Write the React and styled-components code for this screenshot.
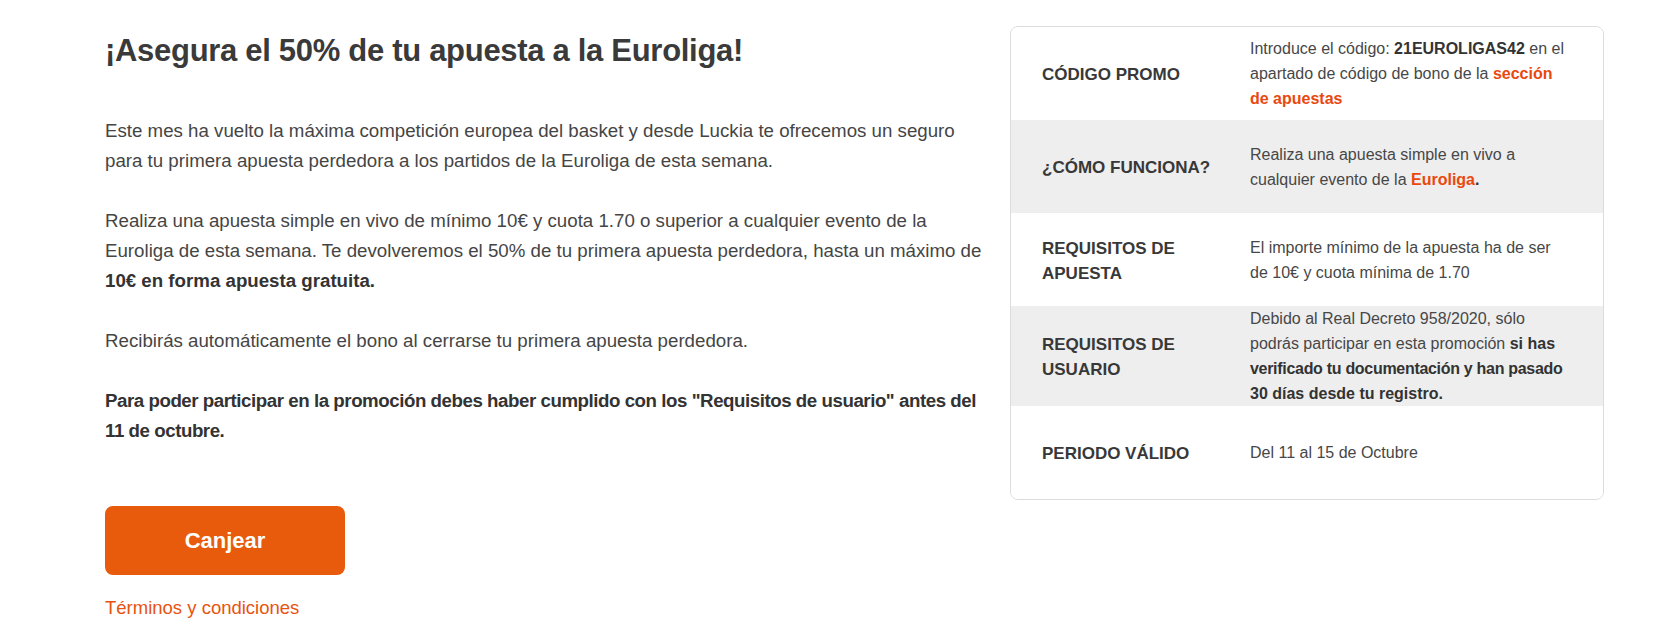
import React from "react";
import styled, { createGlobalStyle } from "styled-components";

const GlobalStyle = createGlobalStyle`
  html, body {
    margin: 0;
    padding: 0;
    background: #ffffff;
  }
  body {
    font-family: "Liberation Sans", Arial, sans-serif;
    color: #444444;
  }
`;

const Page = styled.div`
  display: flex;
  align-items: flex-start;
  gap: 25px;
  padding: 26px 0 0 105px;
`;

const Main = styled.section`
  width: 880px;
  flex: none;
`;

const Title = styled.h1`
  margin: 0 0 40px;
  font-family: "Liberation Sans", Arial, sans-serif;
  font-weight: 700;
  font-size: 31px;
  line-height: 50px;
  letter-spacing: -0.3px;
  color: #3a3a3a;
  white-space: nowrap;
`;

const Paragraph = styled.p`
  margin: 0 0 30px;
  font-size: 18.7px;
  line-height: 30px;
  color: #454545;
  white-space: nowrap;
  font-weight: ${(p) => (p.$bold ? 700 : 400)};
  letter-spacing: ${(p) => (p.$bold ? "-0.45px" : "0")};
  ${(p) => p.$bold && "color: #333333;"}
`;

const Strong = styled.strong`
  font-weight: 700;
  color: #333333;
  letter-spacing: ${(p) => (p.$tight ? "-0.3px" : "0")};
`;

const RedeemButton = styled.button`
  display: block;
  margin: 60px 0 0;
  width: 240px;
  height: 69px;
  border: none;
  border-radius: 8px;
  background: #e95b0c;
  color: #ffffff;
  font-family: "Liberation Sans", Arial, sans-serif;
  font-weight: 700;
  font-size: 22px;
  cursor: pointer;
`;

const TermsLink = styled.a`
  display: block;
  margin-top: 18px;
  font-size: 18.5px;
  line-height: 30px;
  color: #e8530e;
  text-decoration: none;
  cursor: pointer;
`;

const InfoTable = styled.div`
  width: 594px;
  flex: none;
  box-sizing: border-box;
  border: 1px solid #dcdcdc;
  border-radius: 8px;
  overflow: hidden;
  background: #ffffff;
`;

const Row = styled.div`
  display: grid;
  grid-template-columns: 239px 1fr;
  align-items: center;
  min-height: 93px;
  background: ${(p) => (p.$shaded ? "#eeeeee" : "#ffffff")};
`;

const Label = styled.div`
  padding: 2px 8px 0 31px;
  font-weight: 700;
  font-size: 17px;
  line-height: 25px;
  color: #383838;
  white-space: nowrap;
`;

const Value = styled.div`
  padding: 0 31px 0 0;
  font-size: 16px;
  line-height: 25px;
  color: #474747;
  white-space: nowrap;
`;

const Highlight = styled.strong`
  font-weight: 700;
  color: #e8490f;
`;

const rows = [
  {
    label: <>CÓDIGO PROMO</>,
    value: (
      <>
        Introduce el código: <Strong>21EUROLIGAS42</Strong> en el
        <br />
        apartado de código de bono de la <Highlight>sección</Highlight>
        <br />
        <Highlight>de apuestas</Highlight>
      </>
    ),
  },
  {
    label: <>¿CÓMO FUNCIONA?</>,
    shaded: true,
    value: (
      <>
        Realiza una apuesta simple en vivo a
        <br />
        cualquier evento de la <Highlight>Euroliga</Highlight>
        <Strong>.</Strong>
      </>
    ),
  },
  {
    label: (
      <>
        REQUISITOS DE
        <br />
        APUESTA
      </>
    ),
    value: (
      <>
        El importe mínimo de la apuesta ha de ser
        <br />
        de 10€ y cuota mínima de 1.70
      </>
    ),
  },
  {
    label: (
      <>
        REQUISITOS DE
        <br />
        USUARIO
      </>
    ),
    shaded: true,
    value: (
      <>
        Debido al Real Decreto 958/2020, sólo
        <br />
        podrás participar en esta promoción <Strong>si has</Strong>
        <br />
        <Strong $tight>verificado tu documentación y han pasado</Strong>
        <br />
        <Strong>30 días desde tu registro.</Strong>
      </>
    ),
  },
  {
    label: <>PERIODO VÁLIDO</>,
    value: <>Del 11 al 15 de Octubre</>,
  },
];

export default function App() {
  return (
    <>
      <GlobalStyle />
      <Page>
        <Main>
          <Title>¡Asegura el 50% de tu apuesta a la Euroliga!</Title>
          <Paragraph>
            Este mes ha vuelto la máxima competición europea del basket y desde Luckia te ofrecemos un seguro
            <br />
            para tu primera apuesta perdedora a los partidos de la Euroliga de esta semana.
          </Paragraph>
          <Paragraph>
            Realiza una apuesta simple en vivo de mínimo 10€ y cuota 1.70 o superior a cualquier evento de la
            <br />
            Euroliga de esta semana. Te devolveremos el 50% de tu primera apuesta perdedora, hasta un máximo de
            <br />
            <Strong>10€ en forma apuesta gratuita.</Strong>
          </Paragraph>
          <Paragraph>Recibirás automáticamente el bono al cerrarse tu primera apuesta perdedora.</Paragraph>
          <Paragraph $bold>
            Para poder participar en la promoción debes haber cumplido con los "Requisitos de usuario" antes del
            <br />
            11 de octubre.
          </Paragraph>
          <RedeemButton type="button">Canjear</RedeemButton>
          <TermsLink>Términos y condiciones</TermsLink>
        </Main>
        <InfoTable>
          {rows.map((row, i) => (
            <Row key={i} $shaded={row.shaded}>
              <Label>{row.label}</Label>
              <Value>{row.value}</Value>
            </Row>
          ))}
        </InfoTable>
      </Page>
    </>
  );
}
